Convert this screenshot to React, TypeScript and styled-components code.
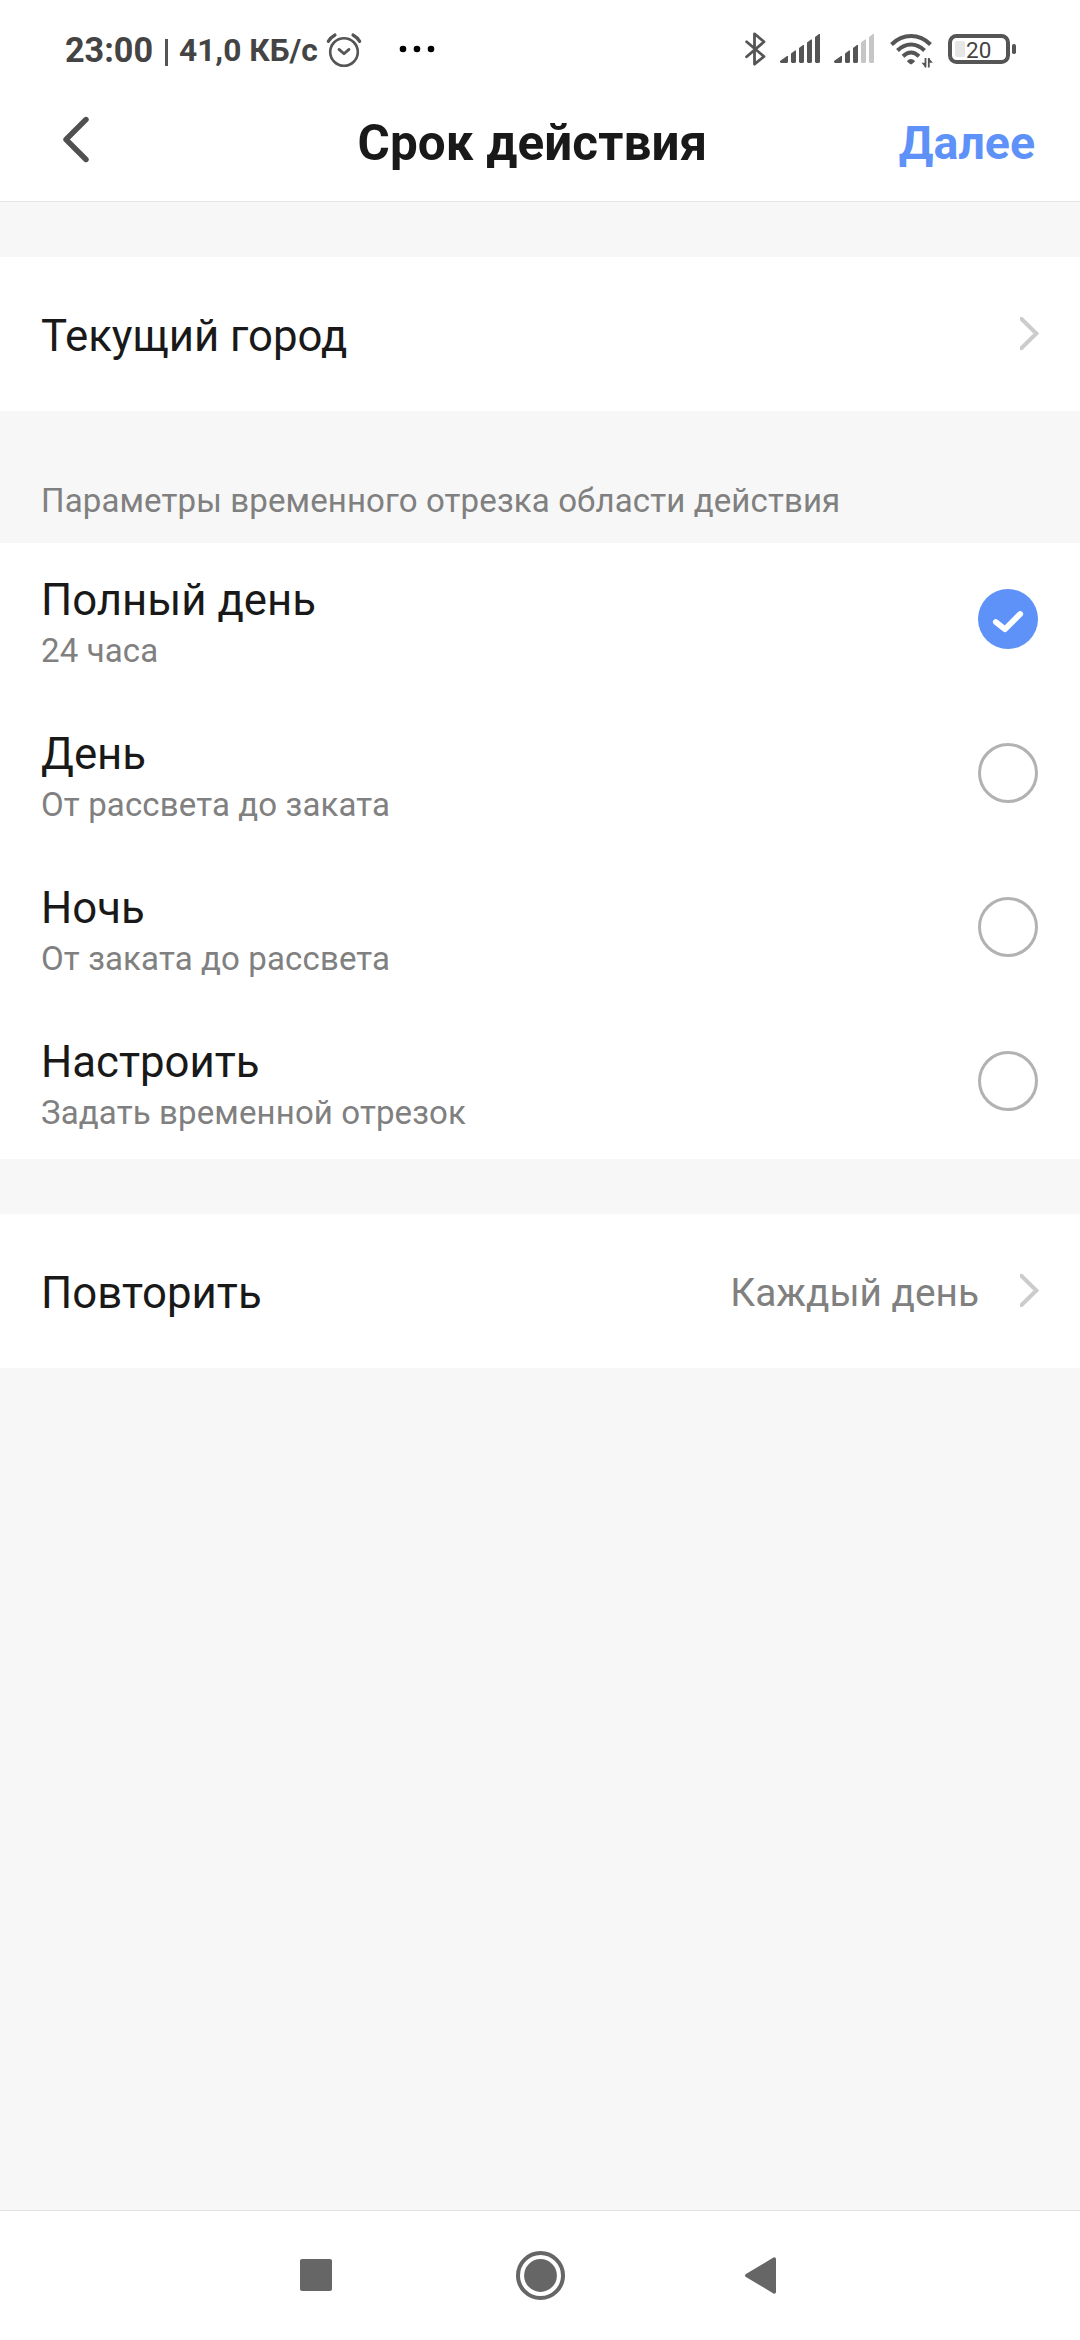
import React, { useState } from "react";
import styled, { createGlobalStyle } from "styled-components";

const GlobalStyle = createGlobalStyle`
  *, *::before, *::after { box-sizing: border-box; }
  html, body { margin: 0; padding: 0; background: #f7f7f7; }
  button { border: 0; padding: 0; background: none; font: inherit; color: inherit; text-align: left; }
  svg { display: block; flex: none; }
`;

const Screen = styled.div`
  width: 1080px;
  height: 2340px;
  display: flex;
  flex-direction: column;
  background: #f7f7f7;
  color: #191919;
  font-family: Roboto, "Noto Sans", sans-serif;
  overflow: hidden;
`;

const Top = styled.header`
  height: 202px;
  flex: none;
  background: #fff;
  border-bottom: 1px solid #e4e4e4;
`;

const StatusBar = styled.div`
  height: 98px;
  display: flex;
  align-items: flex-start;
  padding: 30px 64px 0 65px;
  color: #444;
`;

const Clock = styled.span`
  width: 100px;
  font-size: 34.2px;
  line-height: 40px;
  font-weight: 700;
  white-space: nowrap;
`;

const Divider = styled.span`
  width: 3px;
  height: 27px;
  margin-top: 9px;
  background: #555;
`;

const Speed = styled.span`
  width: 147px;
  margin-left: 11px;
  font-size: 31.7px;
  line-height: 42px;
  font-weight: 700;
  white-space: nowrap;
`;

const StatusIcons = styled.div`
  margin-left: auto;
  display: flex;
`;

const BatteryText = styled.text`
  font-family: Roboto, sans-serif;
  font-size: 22.5px;
  fill: #444;
`;

const TitleBar = styled.div`
  height: 103px;
  display: flex;
  align-items: flex-start;
  padding: 0 45px 0 60px;
`;

const BackButton = styled.button`
  width: 297.5px;
  padding-top: 18px;
`;

const Title = styled.h1`
  margin: 0;
  padding-top: 17px;
  font-size: 49.4px;
  line-height: 56px;
  font-weight: 700;
  letter-spacing: 0.12px;
  white-space: nowrap;
`;

const NextButton = styled.button`
  margin-left: auto;
  padding-top: 17px;
  font-size: 46.5px;
  line-height: 56px;
  font-weight: 700;
  color: #5e92f8;
`;

const Content = styled.main`
  flex: 1;
  padding-top: 55px;
`;

const LinkRow = styled.button`
  width: 1080px;
  height: 154px;
  display: flex;
  align-items: center;
  padding: 3px 41px 0 41px;
  background: #fff;
`;

const RowLabel = styled.span`
  font-size: 43.75px;
  line-height: 52px;
`;

const RowValue = styled.span`
  margin-left: auto;
  font-size: 38.8px;
  line-height: 46px;
  color: #808080;
`;

const ChevronSlot = styled.span<{ $push?: boolean }>`
  margin-left: ${(p) => (p.$push ? "auto" : "41px")};
  padding-bottom: 4px;
`;

const SectionLabel = styled.h2`
  height: 132px;
  margin: 0;
  padding: 70px 41px 0;
  font-size: 33px;
  line-height: 40px;
  font-weight: 400;
  letter-spacing: 0.13px;
  color: #808080;
`;

const Options = styled.div`
  margin-bottom: 55px;
  background: #fff;
`;

const OptionRow = styled.button`
  width: 1080px;
  height: 154px;
  display: flex;
  align-items: center;
  justify-content: space-between;
  padding: 0 42px 2px 41px;
`;

const OptionTexts = styled.span`
  align-self: flex-start;
  display: flex;
  flex-direction: column;
  padding-top: 31px;
`;

const OptionNote = styled.span`
  font-size: 33px;
  line-height: 50px;
  letter-spacing: 0.13px;
  color: #808080;
`;

const NavBar = styled.nav`
  height: 130px;
  flex: none;
  display: flex;
  align-items: center;
  border-top: 1px solid #e2e2e2;
  background: #fff;
  padding: 0 304px 0 300px;
  justify-content: space-between;
`;

const NavButton = styled.button<{ $left?: number; $bottom?: number }>`
  margin-left: ${(p) => p.$left ?? 0}px;
  margin-bottom: ${(p) => p.$bottom ?? 0}px;
`;

const AlarmIcon = () => (
  <svg width="36" height="36" viewBox="0 0 36 36" fill="none" stroke="#555" strokeWidth="2.6">
    <circle cx="18" cy="20" r="13.8" />
    <path d="M13 17.400l5 4.400 5-4.400" strokeWidth="2.8" strokeLinecap="round" strokeLinejoin="round" />
    <path d="M2.300 9.300Q4.600 5.500 9 3M33.700 9.300Q31.400 5.500 27 3" strokeWidth="3.200" strokeLinecap="round" />
  </svg>
);

const DotsIcon = () => (
  <svg width="36" height="8" viewBox="0 0 36 8" fill="#000">
    <circle cx="4" cy="4" r="3.300" />
    <circle cx="18" cy="4" r="3.300" />
    <circle cx="32" cy="4" r="3.300" />
  </svg>
);

const AlarmSlot = styled.span`
  margin-top: 2px;
`;

const DotsSlot = styled.span`
  margin: 15px 0 0 37px;
`;

const BluetoothIcon = () => (
  <svg width="21" height="34" viewBox="0 0 21 34" fill="none" stroke="#555" strokeWidth="2.800" strokeLinejoin="round" strokeLinecap="round">
    <path d="M1.600 9.800L19 24.500L9.500 32.200V1.800L19 9.800L1.600 24.800" />
  </svg>
);

const barTops = [22, 16.500, 11, 5.500, 0];

const SignalIcon = ({ level }: { level: number }) => (
  <svg width="40" height="29" viewBox="0 0 40 29">
    {barTops.map((top, i) => {
      const x = i === 0 ? 0 : 3 + i * 8;
      const right = 8 + i * 8;
      const lead = i === 0 ? 27 : top + 3;
      return (
        <path
          key={top}
          fill={i < level ? "#555" : "#c6c6c6"}
          d={`M${x} ${lead}L${right - 1} ${top}H${right}V28L${right - 1} 29H${x + 1}L${x} 28Z`}
        />
      );
    })}
  </svg>
);

const WifiIcon = () => (
  <svg width="43" height="34" viewBox="0 0 43 34" fill="none" stroke="#555" strokeWidth="4">
    <path d="M1.500 10.500Q10 2 21 2T40.500 10.500" />
    <path d="M7.500 16.500Q13.500 10.400 21 10.400T34.500 16.500" />
    <path d="M13 22.300Q17 18.600 21 18.600T29 22.300" />
    <path d="M16.800 27.300Q21 22.700 25.200 27.300L21.700 30.300H20.300Z" fill="#555" stroke="none" />
    <path d="M35.500 24V33.500M38.800 24V33.500" strokeWidth="1.800" />
    <path d="M35.500 33.500L31.500 28.800H35.500ZM38.800 24L42.800 28.700H38.800Z" fill="#555" stroke="none" />
  </svg>
);

const BatteryIcon = ({ percent }: { percent: number }) => (
  <svg width="68" height="30" viewBox="0 0 68 30">
    <rect x="2" y="2" width="58" height="26" rx="6.500" fill="none" stroke="#555" strokeWidth="4" />
    <rect x="7" y="7" width="10" height="16" rx="2" fill="#e6e6e6" />
    <rect x="64" y="10" width="4" height="10" rx="1.800" fill="#555" />
    <BatteryText x="18" y="23.500">{percent}</BatteryText>
  </svg>
);

const StatusSlot = styled.span<{ $top: number; $gap: number }>`
  margin: ${(p) => p.$top}px 0 0 ${(p) => p.$gap}px;
`;

const BackIcon = () => (
  <svg width="32" height="48" viewBox="0 0 32 48" fill="none" stroke="#505050" strokeWidth="5.400" strokeLinecap="round" strokeLinejoin="round">
    <path d="M26 3.500L6 23.500L26 43.500" />
  </svg>
);

const ChevronIcon = () => (
  <svg width="19" height="33" viewBox="0 0 19 33" fill="none" stroke="#ccc" strokeWidth="4">
    <path d="M-1 -0.500L16.300 16.500L-1 33.500" />
  </svg>
);

const RadioIcon = ({ checked }: { checked: boolean }) => (
  <svg width="60" height="60" viewBox="0 0 60 60" fill="none">
    {checked ? (
      <>
        <circle cx="30" cy="30" r="30" fill="#5e92f8" />
        <path d="M17.800 33L27 40.200L42.200 25" stroke="#fff" strokeWidth="5.800" strokeLinecap="round" strokeLinejoin="round" />
      </>
    ) : (
      <circle cx="30" cy="30" r="28.500" stroke="#b2b2b2" strokeWidth="3" />
    )}
  </svg>
);

const options = [
  { id: "full", title: "Полный день", note: "24 часа" },
  { id: "day", title: "День", note: "От рассвета до заката" },
  { id: "night", title: "Ночь", note: "От заката до рассвета" },
  { id: "custom", title: "Настроить", note: "Задать временной отрезок" },
];

export default function App() {
  const [selected, setSelected] = useState("full");
  return (
    <Screen>
      <GlobalStyle />
      <Top>
        <StatusBar>
          <Clock>23:00</Clock>
          <Divider />
          <Speed>41,0 КБ/с</Speed>
          <AlarmSlot><AlarmIcon /></AlarmSlot>
          <DotsSlot><DotsIcon /></DotsSlot>
          <StatusIcons>
            <StatusSlot $top={2} $gap={0}><BluetoothIcon /></StatusSlot>
            <StatusSlot $top={4} $gap={14}><SignalIcon level={5} /></StatusSlot>
            <StatusSlot $top={4} $gap={14}><SignalIcon level={3} /></StatusSlot>
            <StatusSlot $top={4} $gap={16}><WifiIcon /></StatusSlot>
            <StatusSlot $top={4} $gap={15}><BatteryIcon percent={20} /></StatusSlot>
          </StatusIcons>
        </StatusBar>
        <TitleBar>
          <BackButton aria-label="Назад"><BackIcon /></BackButton>
          <Title>Срок действия</Title>
          <NextButton>Далее</NextButton>
        </TitleBar>
      </Top>
      <Content>
        <LinkRow>
          <RowLabel>Текущий город</RowLabel>
          <ChevronSlot $push><ChevronIcon /></ChevronSlot>
        </LinkRow>
        <SectionLabel>Параметры временного отрезка области действия</SectionLabel>
        <Options>
          {options.map((o) => (
            <OptionRow key={o.id} onClick={() => setSelected(o.id)}>
              <OptionTexts>
                <RowLabel>{o.title}</RowLabel>
                <OptionNote>{o.note}</OptionNote>
              </OptionTexts>
              <RadioIcon checked={o.id === selected} />
            </OptionRow>
          ))}
        </Options>
        <LinkRow>
          <RowLabel>Повторить</RowLabel>
          <RowValue>Каждый день</RowValue>
          <ChevronSlot><ChevronIcon /></ChevronSlot>
        </LinkRow>
      </Content>
      <NavBar>
        <NavButton aria-label="Недавние" $bottom={1}>
          <svg width="32" height="32"><rect width="32" height="32" rx="2" fill="#666" /></svg>
        </NavButton>
        <NavButton aria-label="Домой" $left={4}>
          <svg width="49" height="49" viewBox="0 0 49 49">
            <circle cx="24.500" cy="24.500" r="22.500" fill="none" stroke="#666" strokeWidth="4" />
            <circle cx="24.500" cy="24.500" r="16.400" fill="#666" />
          </svg>
        </NavButton>
        <NavButton aria-label="Назад">
          <svg width="31" height="37" viewBox="0 0 31 37">
            <path d="M1.800 18.500L29.300 2V35Z" fill="#666" stroke="#666" strokeWidth="3.400" strokeLinejoin="round" />
          </svg>
        </NavButton>
      </NavBar>
    </Screen>
  );
}
